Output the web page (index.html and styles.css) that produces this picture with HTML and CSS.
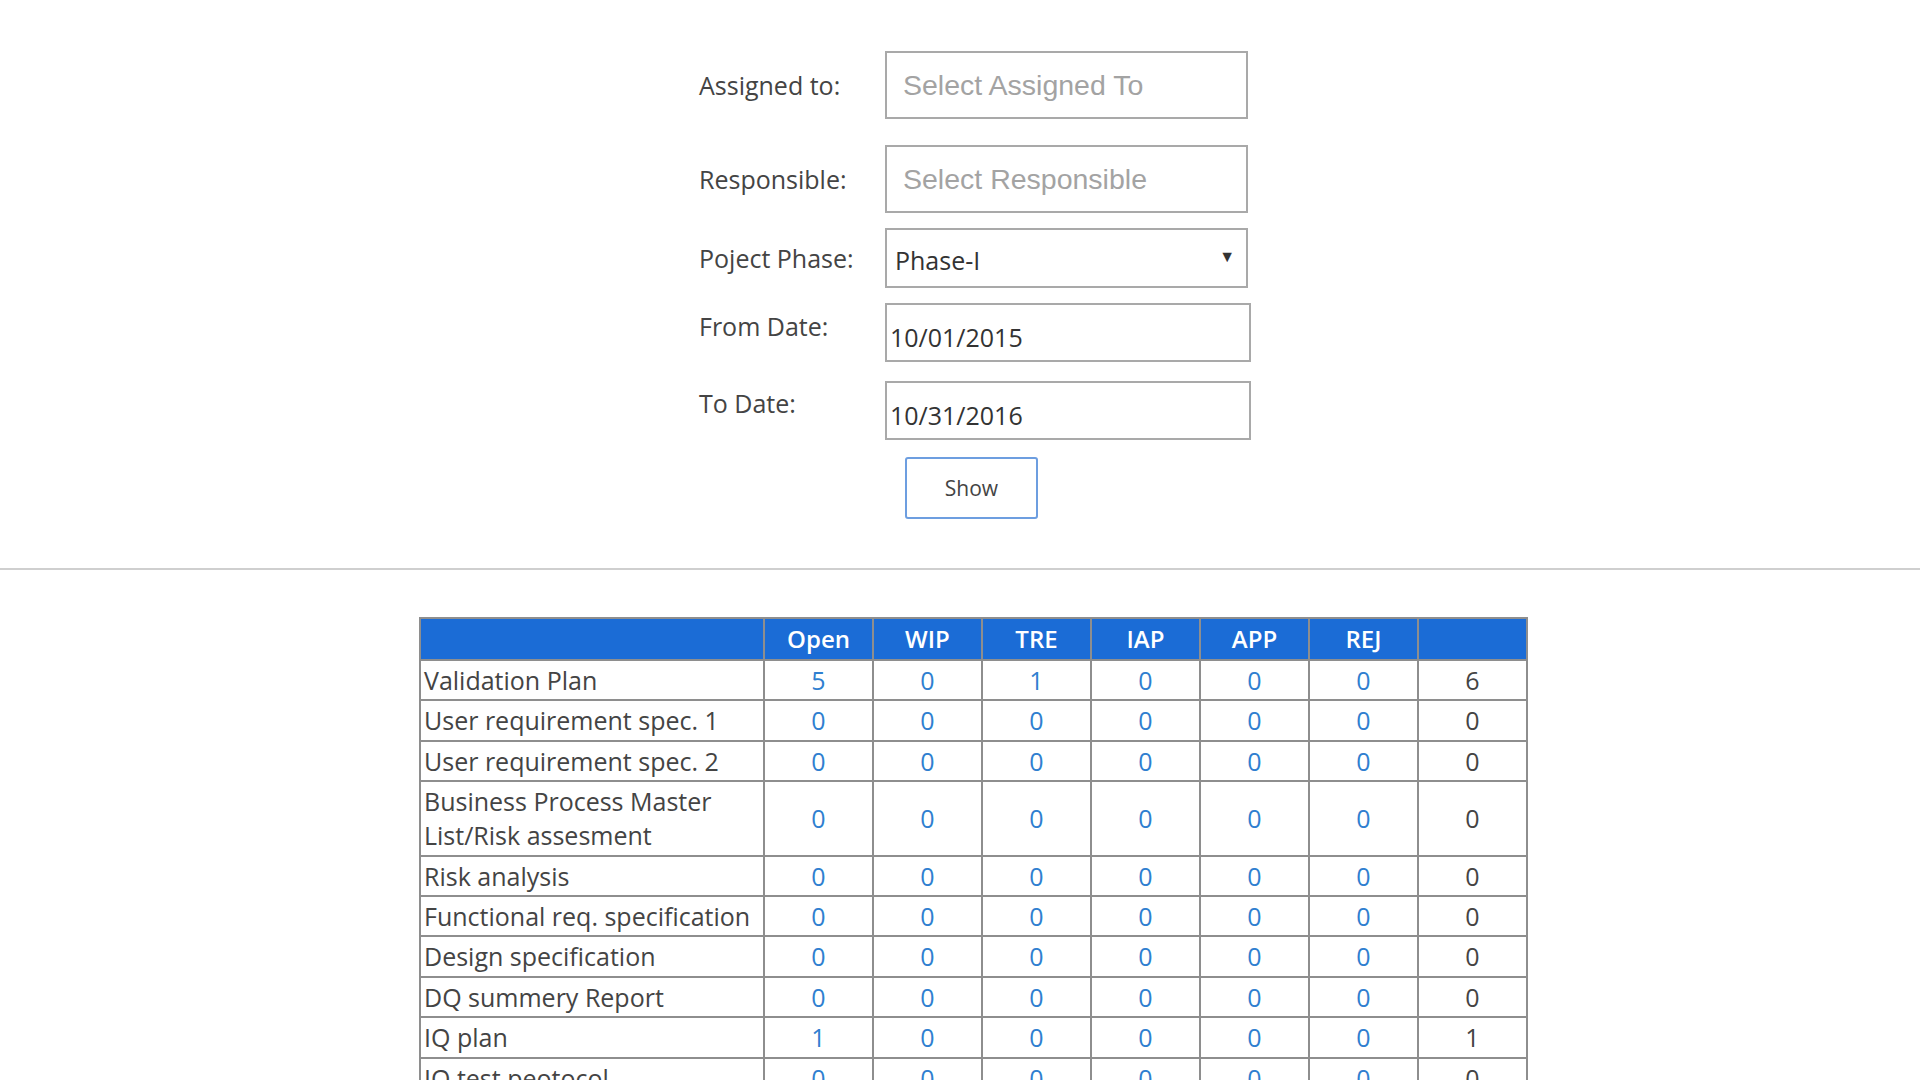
FILE: index.html
```html
<!DOCTYPE html>
<html lang="en">
<head>
<meta charset="utf-8">
<title>Phase Report</title>
<link rel="stylesheet" href="styles.css">
</head>
<body>
<div class="page">
  <form class="filters">
    <div class="frow">
      <label class="lbl">Assigned to:</label>
      <input class="picker" type="text" placeholder="Select Assigned To">
    </div>
    <div class="frow gap-l">
      <label class="lbl">Responsible:</label>
      <input class="picker" type="text" placeholder="Select Responsible">
    </div>
    <div class="frow gap-s">
      <label class="lbl">Poject Phase:</label>
      <div class="select"><span>Phase-I</span><span class="arrow">&#9660;</span></div>
    </div>
    <div class="frow top gap-m">
      <label class="lbl lbl-from">From Date:</label>
      <div class="date">10/01/2015</div>
    </div>
    <div class="frow top gap-n">
      <label class="lbl lbl-to">To Date:</label>
      <div class="date">10/31/2016</div>
    </div>
    <div class="frow gap-b">
      <span class="lbl"></span>
      <button type="button" class="show">Show</button>
    </div>
  </form>

  <hr class="divider">

  <table class="report">
    <colgroup>
      <col class="c-name"><col class="c-num"><col class="c-num"><col class="c-num"><col class="c-num"><col class="c-num"><col class="c-num"><col class="c-num">
    </colgroup>
    <thead>
      <tr><th></th><th>Open</th><th>WIP</th><th>TRE</th><th>IAP</th><th>APP</th><th>REJ</th><th></th></tr>
    </thead>
    <tbody>
      <tr><td class="name">Validation Plan</td><td class="n">5</td><td class="n">0</td><td class="n">1</td><td class="n">0</td><td class="n">0</td><td class="n">0</td><td class="t">6</td></tr>
      <tr><td class="name">User requirement spec. 1</td><td class="n">0</td><td class="n">0</td><td class="n">0</td><td class="n">0</td><td class="n">0</td><td class="n">0</td><td class="t">0</td></tr>
      <tr><td class="name">User requirement spec. 2</td><td class="n">0</td><td class="n">0</td><td class="n">0</td><td class="n">0</td><td class="n">0</td><td class="n">0</td><td class="t">0</td></tr>
      <tr><td class="name">Business Process Master List/Risk assesment</td><td class="n">0</td><td class="n">0</td><td class="n">0</td><td class="n">0</td><td class="n">0</td><td class="n">0</td><td class="t">0</td></tr>
      <tr><td class="name">Risk analysis</td><td class="n">0</td><td class="n">0</td><td class="n">0</td><td class="n">0</td><td class="n">0</td><td class="n">0</td><td class="t">0</td></tr>
      <tr><td class="name">Functional req. specification</td><td class="n">0</td><td class="n">0</td><td class="n">0</td><td class="n">0</td><td class="n">0</td><td class="n">0</td><td class="t">0</td></tr>
      <tr><td class="name">Design specification</td><td class="n">0</td><td class="n">0</td><td class="n">0</td><td class="n">0</td><td class="n">0</td><td class="n">0</td><td class="t">0</td></tr>
      <tr><td class="name">DQ summery Report</td><td class="n">0</td><td class="n">0</td><td class="n">0</td><td class="n">0</td><td class="n">0</td><td class="n">0</td><td class="t">0</td></tr>
      <tr><td class="name">IQ plan</td><td class="n">1</td><td class="n">0</td><td class="n">0</td><td class="n">0</td><td class="n">0</td><td class="n">0</td><td class="t">1</td></tr>
      <tr><td class="name">IQ test peotocol</td><td class="n">0</td><td class="n">0</td><td class="n">0</td><td class="n">0</td><td class="n">0</td><td class="n">0</td><td class="t">0</td></tr>
    </tbody>
  </table>
</div>
</body>
</html>
```
FILE: styles.css
```css
html, body {
  margin: 0;
  padding: 0;
  background: #ffffff;
}

body {
  font-family: "Open Sans", "Noto Sans", sans-serif;
  color: #444444;
  height: 1080px;
  overflow: hidden;
}

.page {
  padding-top: 51px;
}

/* ---------- filter form ---------- */
.filters {
  width: 552px;
  margin: 0 auto;
  padding-left: 30px;
  display: flex;
  flex-direction: column;
}

.frow {
  display: flex;
  align-items: center;
}

.frow.top {
  align-items: flex-start;
}

.gap-l { margin-top: 26px; }
.gap-s { margin-top: 15px; }
.gap-m { margin-top: 15px; }
.gap-n { margin-top: 19px; }
.gap-b { margin-top: 17px; }

.lbl {
  flex: 0 0 186px;
  font-size: 25px;
  line-height: 34px;
  color: #444444;
  white-space: nowrap;
}

.lbl-from { margin-top: 6px; }
.lbl-to { margin-top: 5px; }

.picker {
  display: block;
  box-sizing: border-box;
  width: 363px;
  height: 68px;
  margin: 0;
  padding: 0 16px;
  border: 2px solid #a9a9a9;
  border-radius: 0;
  font-family: "Liberation Sans", Arial, sans-serif;
  font-size: 28.5px;
  color: #444444;
  outline: none;
  background: #ffffff;
}

.picker::placeholder {
  color: #a3a3a3;
}

.select {
  box-sizing: border-box;
  width: 363px;
  height: 60px;
  border: 2px solid #a9a9a9;
  display: flex;
  align-items: center;
  justify-content: space-between;
  padding: 4px 11px 0 8px;
  font-size: 25px;
  color: #333333;
}

.select .arrow {
  font-size: 16px;
  color: #333333;
  margin-bottom: 8px;
}

.date {
  box-sizing: border-box;
  width: 366px;
  height: 59px;
  border: 2px solid #a9a9a9;
  display: flex;
  align-items: center;
  padding: 8px 0 0 3px;
  font-size: 25px;
  color: #333333;
}

.show {
  margin-left: 20px;
  width: 133px;
  height: 62px;
  background: #ffffff;
  border: 2px solid #6d9ee0;
  border-radius: 3px;
  font-family: "Open Sans", "Noto Sans", sans-serif;
  font-size: 21px;
  color: #444444;
  padding: 0;
}

.divider {
  border: 0;
  border-top: 2px solid #cfcfcf;
  margin: 49px 0 0 0;
  height: 0;
}

/* ---------- report table ---------- */
.report {
  margin: 47px 0 0 calc(50% - 541px);
  border-collapse: collapse;
  width: 1107px;
  table-layout: fixed;
  font-size: 25px;
}

.c-name { width: 344px; }
.c-num { width: 109px; }

.report th,
.report td {
  border: 2px solid #8e8e8e;
  padding: 2px 3px 2.4px;
  line-height: 34px;
}

.report th {
  background: #1b6cd6;
  color: #ffffff;
  font-size: 24px;
  font-weight: 600;
  text-align: center;
  padding: 3px 3px;
}

.report td.name {
  text-align: left;
  color: #444444;
}

.report td.n {
  text-align: center;
  color: #2f7fd0;
}

.report td.t {
  text-align: center;
  color: #444444;
}
```
